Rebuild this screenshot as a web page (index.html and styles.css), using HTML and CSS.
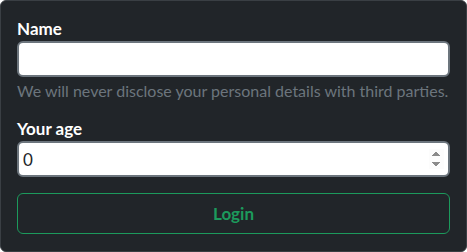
FILE: index.html
```html
<!DOCTYPE html>
<html lang="en">
<head>
    <meta charset="UTF-8">
    <meta name="viewport" content="width=device-width, initial-scale=1.0">
    <title>Login</title>
    <link rel="stylesheet" href="styles.css">
</head>
<body>
    <form class="card">
        <label for="name" class="label">Name</label>
        <input type="text" id="name" class="field">
        <p class="hint">We will never disclose your personal details with third parties.</p>

        <label for="age" class="label">Your age</label>
        <input type="number" id="age" class="field" value="0">

        <button type="button" class="button">Login</button>
    </form>
</body>
</html>
```

FILE: styles.css
```css
html, body {
    margin: 0;
    background-color: #ffffff;
}
.card {
    box-sizing: border-box;
    width: 467px;
    height: 252px;
    margin: 0;
    padding: 16px;
    background-color: #212529;
    border: 1px solid #3a3f44;
    border-radius: 6px;
    font-family: Lato, sans-serif;
    font-size: 16px;
    color: #ffffff;
}
.label {
    display: block;
    font-size: 17px;
    font-weight: 700;
    line-height: 24px;
}
.field {
    display: block;
    box-sizing: border-box;
    width: 100%;
    height: 36px;
    margin: 0;
    padding: 0 4px;
    border: 2px solid #6c757d;
    border-radius: 6px;
    background-color: #ffffff;
    color: #212529;
    font-family: Lato, sans-serif;
    font-size: 17px;
}
.field::-webkit-inner-spin-button {
    opacity: 1;
}
.hint {
    margin: 2px 0 14px;
    color: #6c757d;
    font-size: 16px;
    line-height: 24px;
    white-space: nowrap;
}
.button {
    display: block;
    box-sizing: border-box;
    width: 100%;
    margin-top: 16px;
    height: 41px;
    border: 1px solid #1c9a5c;
    border-radius: 6px;
    background-color: transparent;
    color: #1c9a5c;
    font-family: Lato, sans-serif;
    font-size: 17px;
    font-weight: 700;
    cursor: pointer;
}
```
